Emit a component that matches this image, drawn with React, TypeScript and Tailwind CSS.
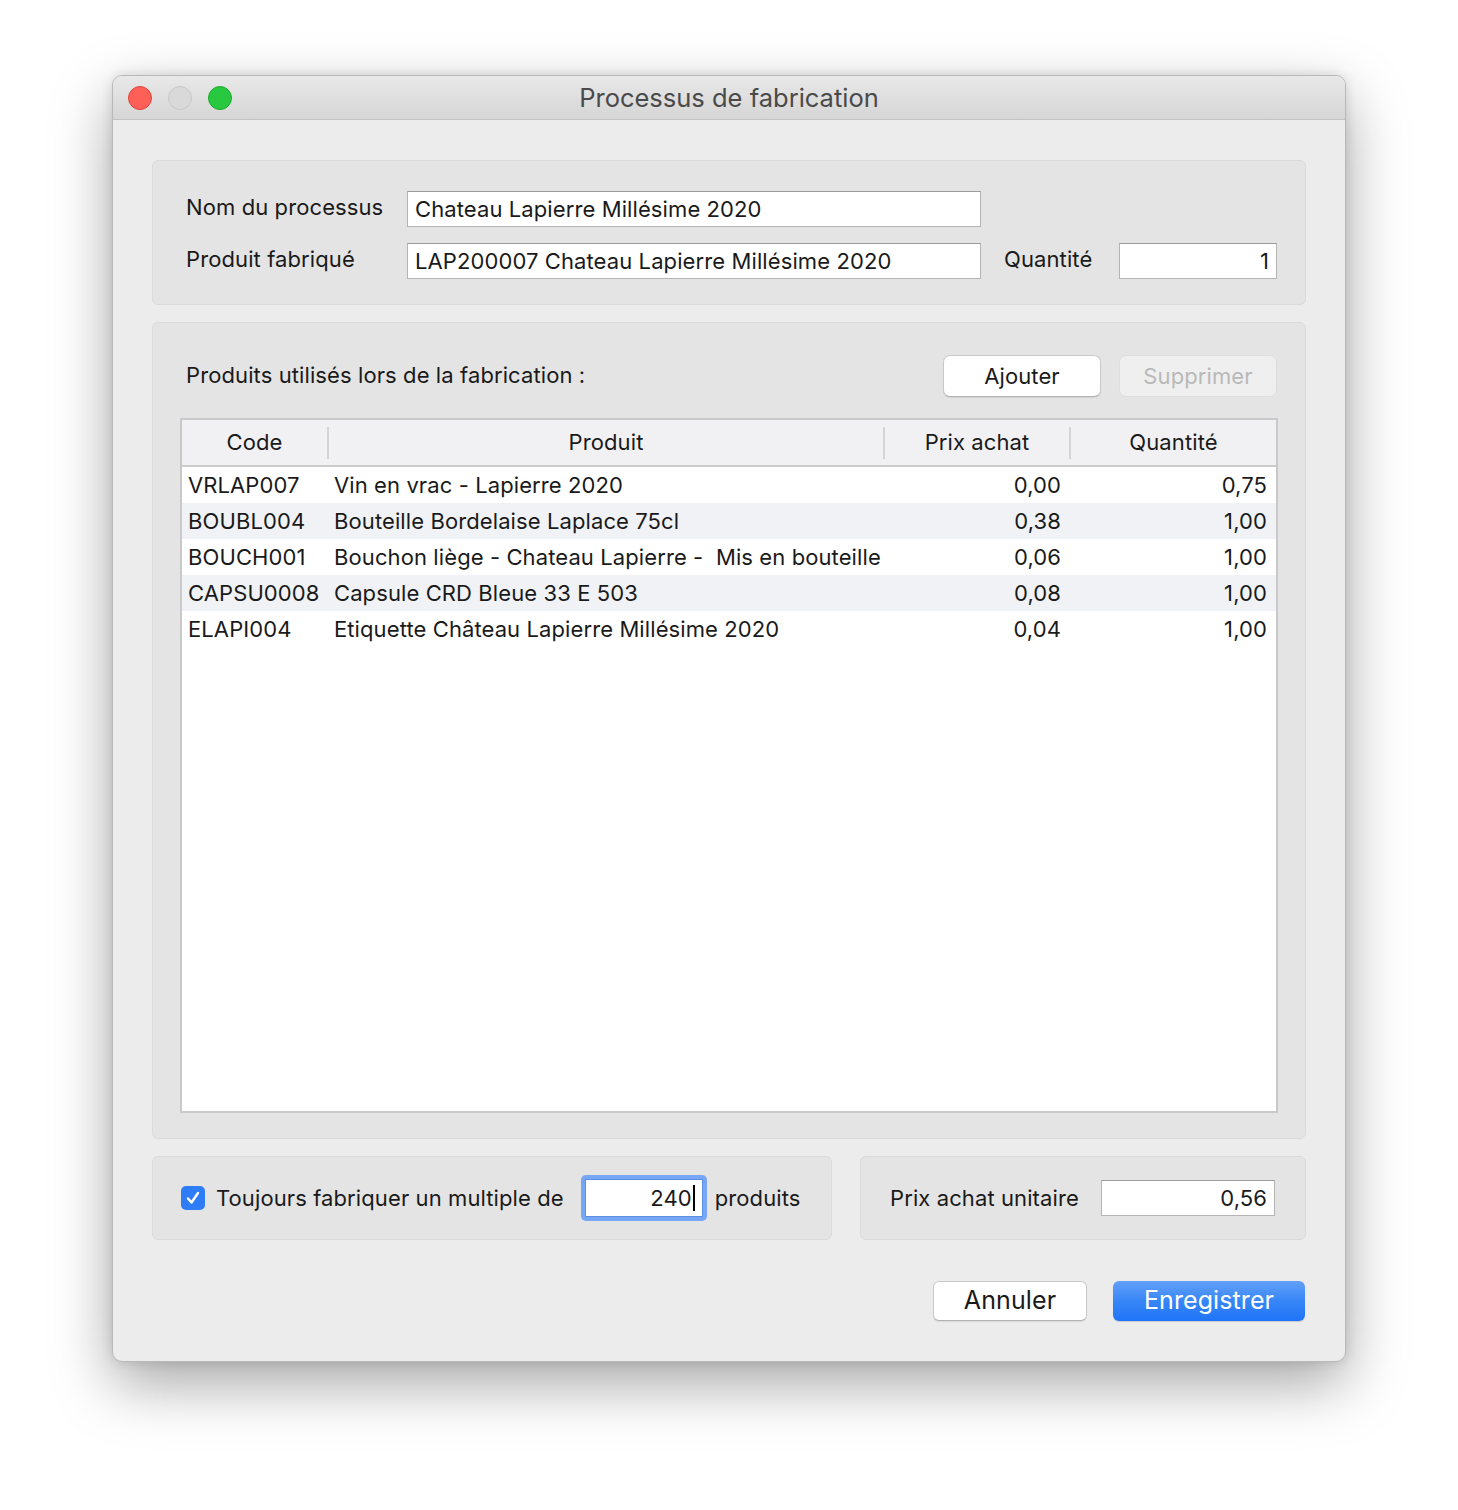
const ROWS = [
  { code: "VRLAP007", produit: "Vin en vrac - Lapierre 2020", prix: "0,00", qte: "0,75" },
  { code: "BOUBL004", produit: "Bouteille Bordelaise Laplace 75cl", prix: "0,38", qte: "1,00" },
  { code: "BOUCH001", produit: "Bouchon liège - Chateau Lapierre -  Mis en bouteille", prix: "0,06", qte: "1,00" },
  { code: "CAPSU0008", produit: "Capsule CRD Bleue 33 E 503", prix: "0,08", qte: "1,00" },
  { code: "ELAPI004", produit: "Etiquette Château Lapierre Millésime 2020", prix: "0,04", qte: "1,00" },
]

const FONT = "font-['Inter','Liberation_Sans',sans-serif]"

function Field({ value, className = "", right = false }: { value: string; className?: string; right?: boolean }) {
  return (
    <div
      className={`flex h-[36px] items-center whitespace-pre border border-[#b4b4b4] border-t-[#9c9c9c] bg-white px-[7px] text-[22px] tracking-[0.1px] text-[#1a1a1a] ${right ? "justify-end" : ""} ${className}`}
    >
      {value}
    </div>
  )
}

function Panel({ className = "", children }: { className?: string; children: React.ReactNode }) {
  return (
    <div className={`rounded-[6px] border border-[#dadada] bg-[#e4e4e4] ${className}`}>{children}</div>
  )
}

export default function App() {
  return (
    <div className={`flex h-[1510px] w-[1458px] justify-center bg-white pt-[75px] ${FONT}`}>
      <div className="flex h-[1287px] w-[1234px] flex-col overflow-hidden rounded-[10px] border border-[#b9b9b9] bg-[#ececec] shadow-[0_22px_60px_rgba(0,0,0,0.35),0_0_12px_rgba(0,0,0,0.12)]">
        {/* Title bar */}
        <div className="relative flex h-[44px] shrink-0 items-center justify-center border-b border-[#c2c2c2] bg-gradient-to-b from-[#e8e8e8] to-[#d6d6d6]">
          <div className="absolute left-[15px] top-[10px] flex gap-[16px]">
            <span className="h-[24px] w-[24px] rounded-full border border-[#e2463f] bg-[#fe5f57]" />
            <span className="h-[24px] w-[24px] rounded-full border border-[#c8c8c8] bg-[#d9d9d9]" />
            <span className="h-[24px] w-[24px] rounded-full border border-[#1aab29] bg-[#28c840]" />
          </div>
          <span className="translate-y-[1px] text-[25.5px] text-[#4a4a4a]">Processus de fabrication</span>
        </div>

        {/* Body */}
        <div className="flex flex-1 flex-col px-[39px] pt-[40px] text-[22px] tracking-[0.1px] text-[#1a1a1a]">
          <Panel className="flex h-[145px] flex-col gap-[16px] pl-[33px] pr-[28px] pt-[30px]">
            <div className="flex items-center">
              <span className="w-[221px] -translate-y-[2px]">Nom du processus</span>
              <Field value="Chateau Lapierre Millésime 2020" className="w-[574px]" />
            </div>
            <div className="flex items-center">
              <span className="w-[221px] -translate-y-[2px]">Produit fabriqué</span>
              <Field value="LAP200007 Chateau Lapierre Millésime 2020" className="w-[574px]" />
              <span className="ml-[23px] w-[115px] -translate-y-[2px]">Quantité</span>
              <Field value="1" right className="w-[158px]" />
            </div>
          </Panel>

          <Panel className="mt-[17px] flex h-[817px] flex-col px-[27px] pt-[32px]">
            <div className="flex items-center pl-[6px] pr-[1px]">
              <span className="flex-1 -translate-y-[1px]">Produits utilisés lors de la fabrication :</span>
              <button className="h-[42px] w-[158px] rounded-[7px] border border-[#c9c9c9] border-b-[#b3b3b3] bg-white text-[22px] text-[#1a1a1a] shadow-[0_1px_1px_rgba(0,0,0,0.08)]">
                Ajouter
              </button>
              <button className="ml-[18px] h-[42px] w-[158px] rounded-[7px] border border-[#dedede] bg-[#efefef] text-[22px] text-[#b9b9b9]">
                Supprimer
              </button>
            </div>

            <div className="mt-[21px] flex h-[695px] flex-col border-2 border-[#c9c9c9] bg-white">
              <div className="flex h-[47px] shrink-0 items-center border-b-2 border-[#cdcdcd] bg-[#f1f1f4]">
                <div className="w-[145px] text-center">Code</div>
                <div className="h-[32px] w-[2px] bg-[#d4d4d4]" />
                <div className="w-[554px] text-center">Produit</div>
                <div className="h-[32px] w-[2px] bg-[#d4d4d4]" />
                <div className="w-[184px] text-center">Prix achat</div>
                <div className="h-[32px] w-[2px] bg-[#d4d4d4]" />
                <div className="flex-1 text-center">Quantité</div>
              </div>
              {ROWS.map((r, i) => (
                <div
                  key={r.code}
                  className={`flex h-[36px] items-center whitespace-pre ${i % 2 === 1 ? "bg-[#f0f2f6]" : "bg-white"}`}
                >
                  <div className="w-[145px] pl-[6px]">{r.code}</div>
                  <div className="w-[556px] pl-[7px]">{r.produit}</div>
                  <div className="w-[186px] pr-[8px] text-right">{r.prix}</div>
                  <div className="flex-1 pr-[9px] text-right">{r.qte}</div>
                </div>
              ))}
            </div>
          </Panel>

          <div className="mt-[17px] flex gap-[28px]">
            <Panel className="flex h-[84px] w-[680px] items-center pl-[28px]">
              <span className="flex h-[24px] w-[24px] items-center justify-center rounded-[5px] bg-[#2f7df6]">
                <svg width="16" height="16" viewBox="0 0 16 16" fill="none">
                  <path d="M3 8.5 L6.5 12.5 L13 3" stroke="white" strokeWidth="2.4" strokeLinecap="round" strokeLinejoin="round" />
                </svg>
              </span>
              <span className="ml-[11px]">Toujours fabriquer un multiple de</span>
              <div className="ml-[17px] rounded-[5px] bg-[#76a6f4] p-[4px]">
                <div className="flex h-[38px] w-[118px] items-center justify-end border border-[#5b8fe6] bg-white pr-[7px]">
                  240<span className="ml-[1px] h-[26px] w-[2px] bg-black" />
                </div>
              </div>
              <span className="ml-[8px]">produits</span>
            </Panel>
            <Panel className="flex h-[84px] flex-1 items-center pl-[29px]">
              <span className="w-[211px]">Prix achat unitaire</span>
              <Field value="0,56" right className="w-[174px]" />
            </Panel>
          </div>

          <div className="mt-[41px] flex justify-end gap-[26px] pr-[1px]">
            <button className="h-[40px] w-[154px] rounded-[6px] border border-[#c9c9c9] border-b-[#b3b3b3] bg-white text-[25px] text-[#1a1a1a] shadow-[0_1px_1px_rgba(0,0,0,0.08)]">
              Annuler
            </button>
            <button className="h-[40px] w-[192px] rounded-[6px] bg-gradient-to-b from-[#62a0f8] via-[#3786f7] to-[#1f73f6] text-[25px] text-white shadow-[0_1px_1px_rgba(0,0,0,0.15)]">
              Enregistrer
            </button>
          </div>
        </div>
      </div>
    </div>
  )
}
